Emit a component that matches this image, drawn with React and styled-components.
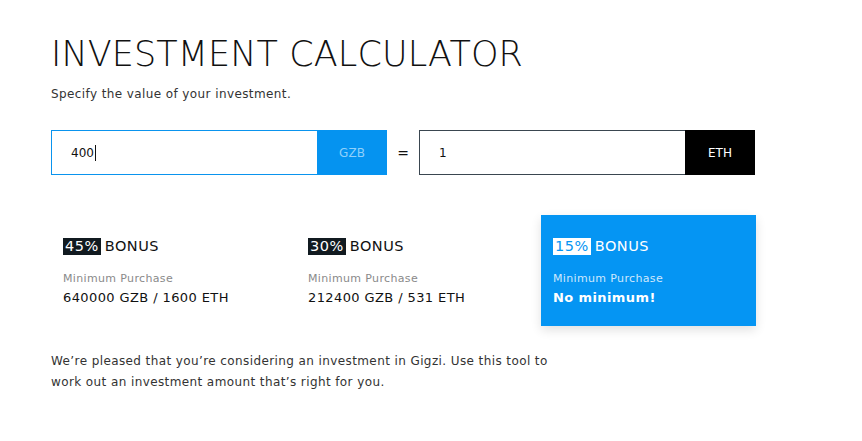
import React from "react";
import styled, { createGlobalStyle } from "styled-components";

const Global = createGlobalStyle`
  html, body { margin: 0; padding: 0; background: #fff; }
  body { font-family: "DejaVu Sans", "Open Sans", sans-serif; color: #1a1a1a; }
  * { box-sizing: border-box; }
`;

const Page = styled.div`
  padding: 34px 0 0 51px;
  width: 862px;
  height: 441px;
`;

const Title = styled.h1`
  margin: 0;
  font-weight: 200;
  font-size: 35px;
  line-height: 40px;
  letter-spacing: 0.1px;
  color: #111;
`;

const Subtitle = styled.p`
  margin: 12px 0 0;
  font-size: 12px;
  line-height: 16px;
  letter-spacing: 0.4px;
  color: #333;
`;

const Row = styled.div`
  display: flex;
  align-items: center;
  margin-top: 28px;
  width: 705px;
`;

const Field = styled.div`
  display: flex;
  height: 45px;
  width: 336px;
  border: 1px solid ${(p) => p.$border};
`;

const Input = styled.div`
  flex: 1;
  display: flex;
  align-items: center;
  padding-left: 19px;
  font-size: 12px;
  color: #111;
`;

const Caret = styled.span`
  display: inline-block;
  width: 1px;
  height: 16px;
  background: #111;
  margin-left: 1px;
`;

const Unit = styled.div`
  width: 70px;
  display: flex;
  align-items: center;
  justify-content: center;
  background: ${(p) => p.$bg};
  color: ${(p) => p.$color};
  font-size: 12px;
  margin: -1px -1px -1px 0;
`;

const Equals = styled.div`
  width: 32px;
  text-align: center;
  font-size: 14px;
  color: #111;
`;

const Cards = styled.div`
  display: grid;
  grid-template-columns: repeat(3, 215px);
  gap: 30px;
  margin-top: 40px;
`;

const Card = styled.div`
  height: 111px;
  padding: 21px 12px 0;
  background: ${(p) => (p.$active ? "#0595f3" : "transparent")};
  box-shadow: ${(p) => (p.$active ? "0 4px 10px rgba(0,0,0,0.12)" : "none")};
  color: ${(p) => (p.$active ? "#fff" : "#111")};
`;

const Bonus = styled.div`
  font-size: 14.5px;
  line-height: 18px;
  letter-spacing: 0.5px;
  display: flex;
  align-items: center;
  gap: 4px;
  margin-top: 1px;
`;

const Badge = styled.span`
  display: inline-block;
  padding: 0 2px;
  line-height: 17px;
  background: ${(p) => (p.$active ? "#fff" : "#111a20")};
  color: ${(p) => (p.$active ? "#0595f3" : "#fff")};
`;

const Label = styled.div`
  margin-top: 17px;
  font-size: 11px;
  line-height: 14px;
  letter-spacing: 0.35px;
  color: ${(p) => (p.$active ? "#cfe8fc" : "#8a8a8a")};
`;

const Value = styled.div`
  margin-top: 3px;
  font-size: 13px;
  line-height: 17px;
  letter-spacing: 0.4px;
  font-weight: ${(p) => (p.$active ? 700 : 500)};
`;

const Text = styled.p`
  margin: 25px 0 0;
  width: 512px;
  font-size: 12px;
  line-height: 21px;
  letter-spacing: 0.4px;
  color: #333;
`;

const cards = [
  { pct: "45%", value: "640000 GZB / 1600 ETH" },
  { pct: "30%", value: "212400 GZB / 531 ETH" },
  { pct: "15%", value: "No minimum!", active: true },
];

export default function App() {
  return (
    <Page>
      <Global />
      <Title>INVESTMENT CALCULATOR</Title>
      <Subtitle>Specify the value of your investment.</Subtitle>
      <Row>
        <Field $border="#0a94ee">
          <Input>
            400
            <Caret />
          </Input>
          <Unit $bg="#0593f0" $color="#8fd0fb">GZB</Unit>
        </Field>
        <Equals>=</Equals>
        <Field $border="#3a4650">
          <Input>1</Input>
          <Unit $bg="#000" $color="#fff">ETH</Unit>
        </Field>
      </Row>
      <Cards>
        {cards.map((c) => (
          <Card key={c.pct} $active={c.active}>
            <Bonus>
              <Badge $active={c.active}>{c.pct}</Badge>BONUS
            </Bonus>
            <Label $active={c.active}>Minimum Purchase</Label>
            <Value $active={c.active}>{c.value}</Value>
          </Card>
        ))}
      </Cards>
      <Text>
        We’re pleased that you’re considering an investment in Gigzi. Use this tool to
        work out an investment amount that’s right for you.
      </Text>
    </Page>
  );
}
